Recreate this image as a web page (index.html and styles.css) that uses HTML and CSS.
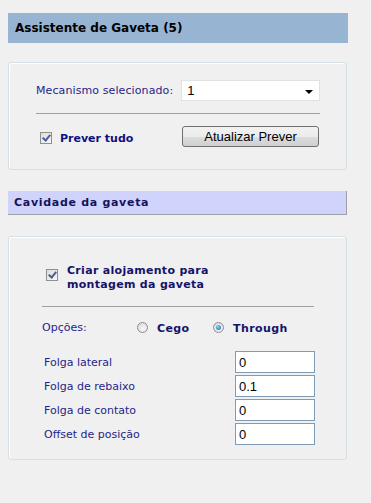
FILE: index.html
```html
<!DOCTYPE html>
<html lang="pt">
<head>
  <meta charset="UTF-8">
  <title>Assistente de Gaveta</title>
  <link rel="stylesheet" href="styles.css">
</head>
<body>
  <div class="wizard">
    <div class="title-bar">Assistente de Gaveta (5)</div>

    <div class="panel panel-top">
      <div class="select-row">
        <span class="label">Mecanismo selecionado:</span>
        <div class="select">
          <span class="select-value">1</span>
          <span class="select-arrow"></span>
        </div>
      </div>
      <div class="separator"></div>
      <div class="preview-row">
        <label class="check">
          <span class="checkbox checked"></span>
          <span class="check-text">Prever tudo</span>
        </label>
        <button class="button">Atualizar Prever</button>
      </div>
    </div>

    <div class="section-bar">Cavidade da gaveta</div>

    <div class="panel panel-bottom">
      <label class="check check-multi">
        <span class="checkbox checked"></span>
        <span class="check-text">Criar alojamento para<br>montagem da gaveta</span>
      </label>
      <div class="separator separator-short"></div>
      <div class="options-row">
        <span class="label">Opções:</span>
        <span class="radio-item"><span class="radio"></span><span class="radio-text">Cego</span></span>
        <span class="radio-item"><span class="radio selected"></span><span class="radio-text">Through</span></span>
      </div>
      <div class="fields">
        <div class="field"><span class="label">Folga lateral</span><input type="text" value="0"></div>
        <div class="field"><span class="label">Folga de rebaixo</span><input type="text" value="0.1"></div>
        <div class="field"><span class="label">Folga de contato</span><input type="text" value="0"></div>
        <div class="field"><span class="label">Offset de posição</span><input type="text" value="0"></div>
      </div>
    </div>
  </div>
</body>
</html>
```

FILE: styles.css
```css
body {
  margin: 0;
  background-color: #f0f0f0;
  font-family: "DejaVu Sans", Verdana, sans-serif;
  font-size: 11px;
  color: #1f1f8a;
}

.wizard {
  width: 340px;
  padding: 13px 0 0 8px;
}

.title-bar {
  height: 30px;
  line-height: 30px;
  padding-left: 7px;
  background-color: #98b4d3;
  color: #000;
  font-weight: bold;
  font-size: 12px;
}

.panel {
  border: 1px solid #d5dfe6;
  border-radius: 3px;
  box-shadow: inset 1px 1px 0 #fff;
  box-sizing: border-box;
  width: 339px;
}

.panel-top {
  margin-top: 19px;
  height: 108px;
  padding: 17px 0 0 27px;
}

.select-row {
  display: flex;
  align-items: center;
  gap: 8px;
}

.select-row .label {
  letter-spacing: 0.1px;
}

.select {
  width: 139px;
  height: 21px;
  box-sizing: border-box;
  background: #fff;
  border: 1px solid #e2e2e2;
  display: flex;
  align-items: center;
  justify-content: space-between;
  padding: 0 6px 0 5px;
}

.select-value {
  font-family: "Liberation Sans", Arial, sans-serif;
  font-size: 13px;
  color: #000;
}

.select-arrow {
  width: 0;
  height: 0;
  border-left: 4px solid transparent;
  border-right: 4px solid transparent;
  border-top: 4px solid #000;
  margin-top: 2px;
}

.separator {
  height: 1px;
  background-color: #a0a0a0;
  width: 284px;
  margin-top: 12px;
}

.preview-row {
  display: flex;
  align-items: center;
  justify-content: space-between;
  width: 283px;
  margin-top: 12px;
}

.check {
  display: flex;
  align-items: center;
  gap: 8px;
  padding-left: 4px;
  margin-top: 3px;
}

.check-text {
  font-weight: bold;
  color: #10107e;
}

.checkbox {
  width: 12px;
  height: 12px;
  box-sizing: border-box;
  border: 1px solid #8e8f8f;
  background: linear-gradient(135deg, #dcdcdc, #f8f8f8);
  flex-shrink: 0;
  position: relative;
}

.checkbox.checked::after {
  content: "";
  position: absolute;
  left: 3px;
  top: 0;
  width: 3px;
  height: 6px;
  border-right: 2px solid #4a5e94;
  border-bottom: 2px solid #4a5e94;
  transform: rotate(40deg);
}

.button {
  width: 137px;
  height: 21px;
  border: 1px solid #707070;
  border-radius: 3px;
  background: linear-gradient(#f2f2f2 0%, #ebebeb 50%, #dddddd 51%, #cfcfcf 100%);
  font-family: "Liberation Sans", Arial, sans-serif;
  font-size: 13px;
  color: #000;
  padding: 0;
}

.section-bar {
  margin-top: 21px;
  height: 24px;
  line-height: 23px;
  box-sizing: border-box;
  padding-left: 6px;
  background-color: #d0d3fc;
  border-right: 1px solid #a0a0a8;
  border-bottom: 1px solid #a0a0a8;
  color: #14145a;
  font-weight: bold;
  font-size: 11px;
  letter-spacing: 0.7px;
  width: 339px;
}

.panel-bottom {
  margin-top: 21px;
  height: 224px;
  padding: 27px 0 0 33px;
}

.check-multi {
  align-items: flex-start;
  gap: 9px;
  padding-left: 4px;
  margin-top: 0;
}

.check-multi .checkbox {
  margin-top: 5px;
}

.check-multi .check-text {
  line-height: 14px;
  color: #14146a;
  letter-spacing: 0.3px;
}

.separator-short {
  width: 272px;
  margin-top: 14px;
}

.options-row {
  display: flex;
  align-items: center;
  margin-top: 13px;
  height: 14px;
}

.options-row .label {
  width: 95px;
}

.radio-item {
  display: flex;
  align-items: center;
  gap: 9px;
  width: 76px;
}

.radio-text {
  font-weight: bold;
  color: #14146a;
  letter-spacing: 0.4px;
  margin-top: 2px;
}

.radio {
  width: 11px;
  height: 11px;
  box-sizing: border-box;
  border-radius: 50%;
  border: 1px solid #8f8f8f;
  background: radial-gradient(circle at 60% 65%, #f8f8f8, #d4d4d4);
  position: relative;
}

.radio.selected::after {
  content: "";
  position: absolute;
  left: 2px;
  top: 2px;
  width: 5px;
  height: 5px;
  border-radius: 50%;
  background: radial-gradient(circle at 40% 35%, #8fd0f4, #0d6aa8);
}

.fields {
  margin-top: 17px;
  display: flex;
  flex-direction: column;
  gap: 2px;
  width: 273px;
}

.field {
  display: flex;
  align-items: center;
  justify-content: space-between;
  padding-left: 2px;
}

.field input {
  width: 80px;
  height: 22px;
  box-sizing: border-box;
  border: 1px solid #7f9db9;
  margin: 0;
  padding: 0 3px;
  font-family: "Liberation Sans", Arial, sans-serif;
  font-size: 13px;
  color: #000;
  background: #fff;
  outline: none;
}
```
